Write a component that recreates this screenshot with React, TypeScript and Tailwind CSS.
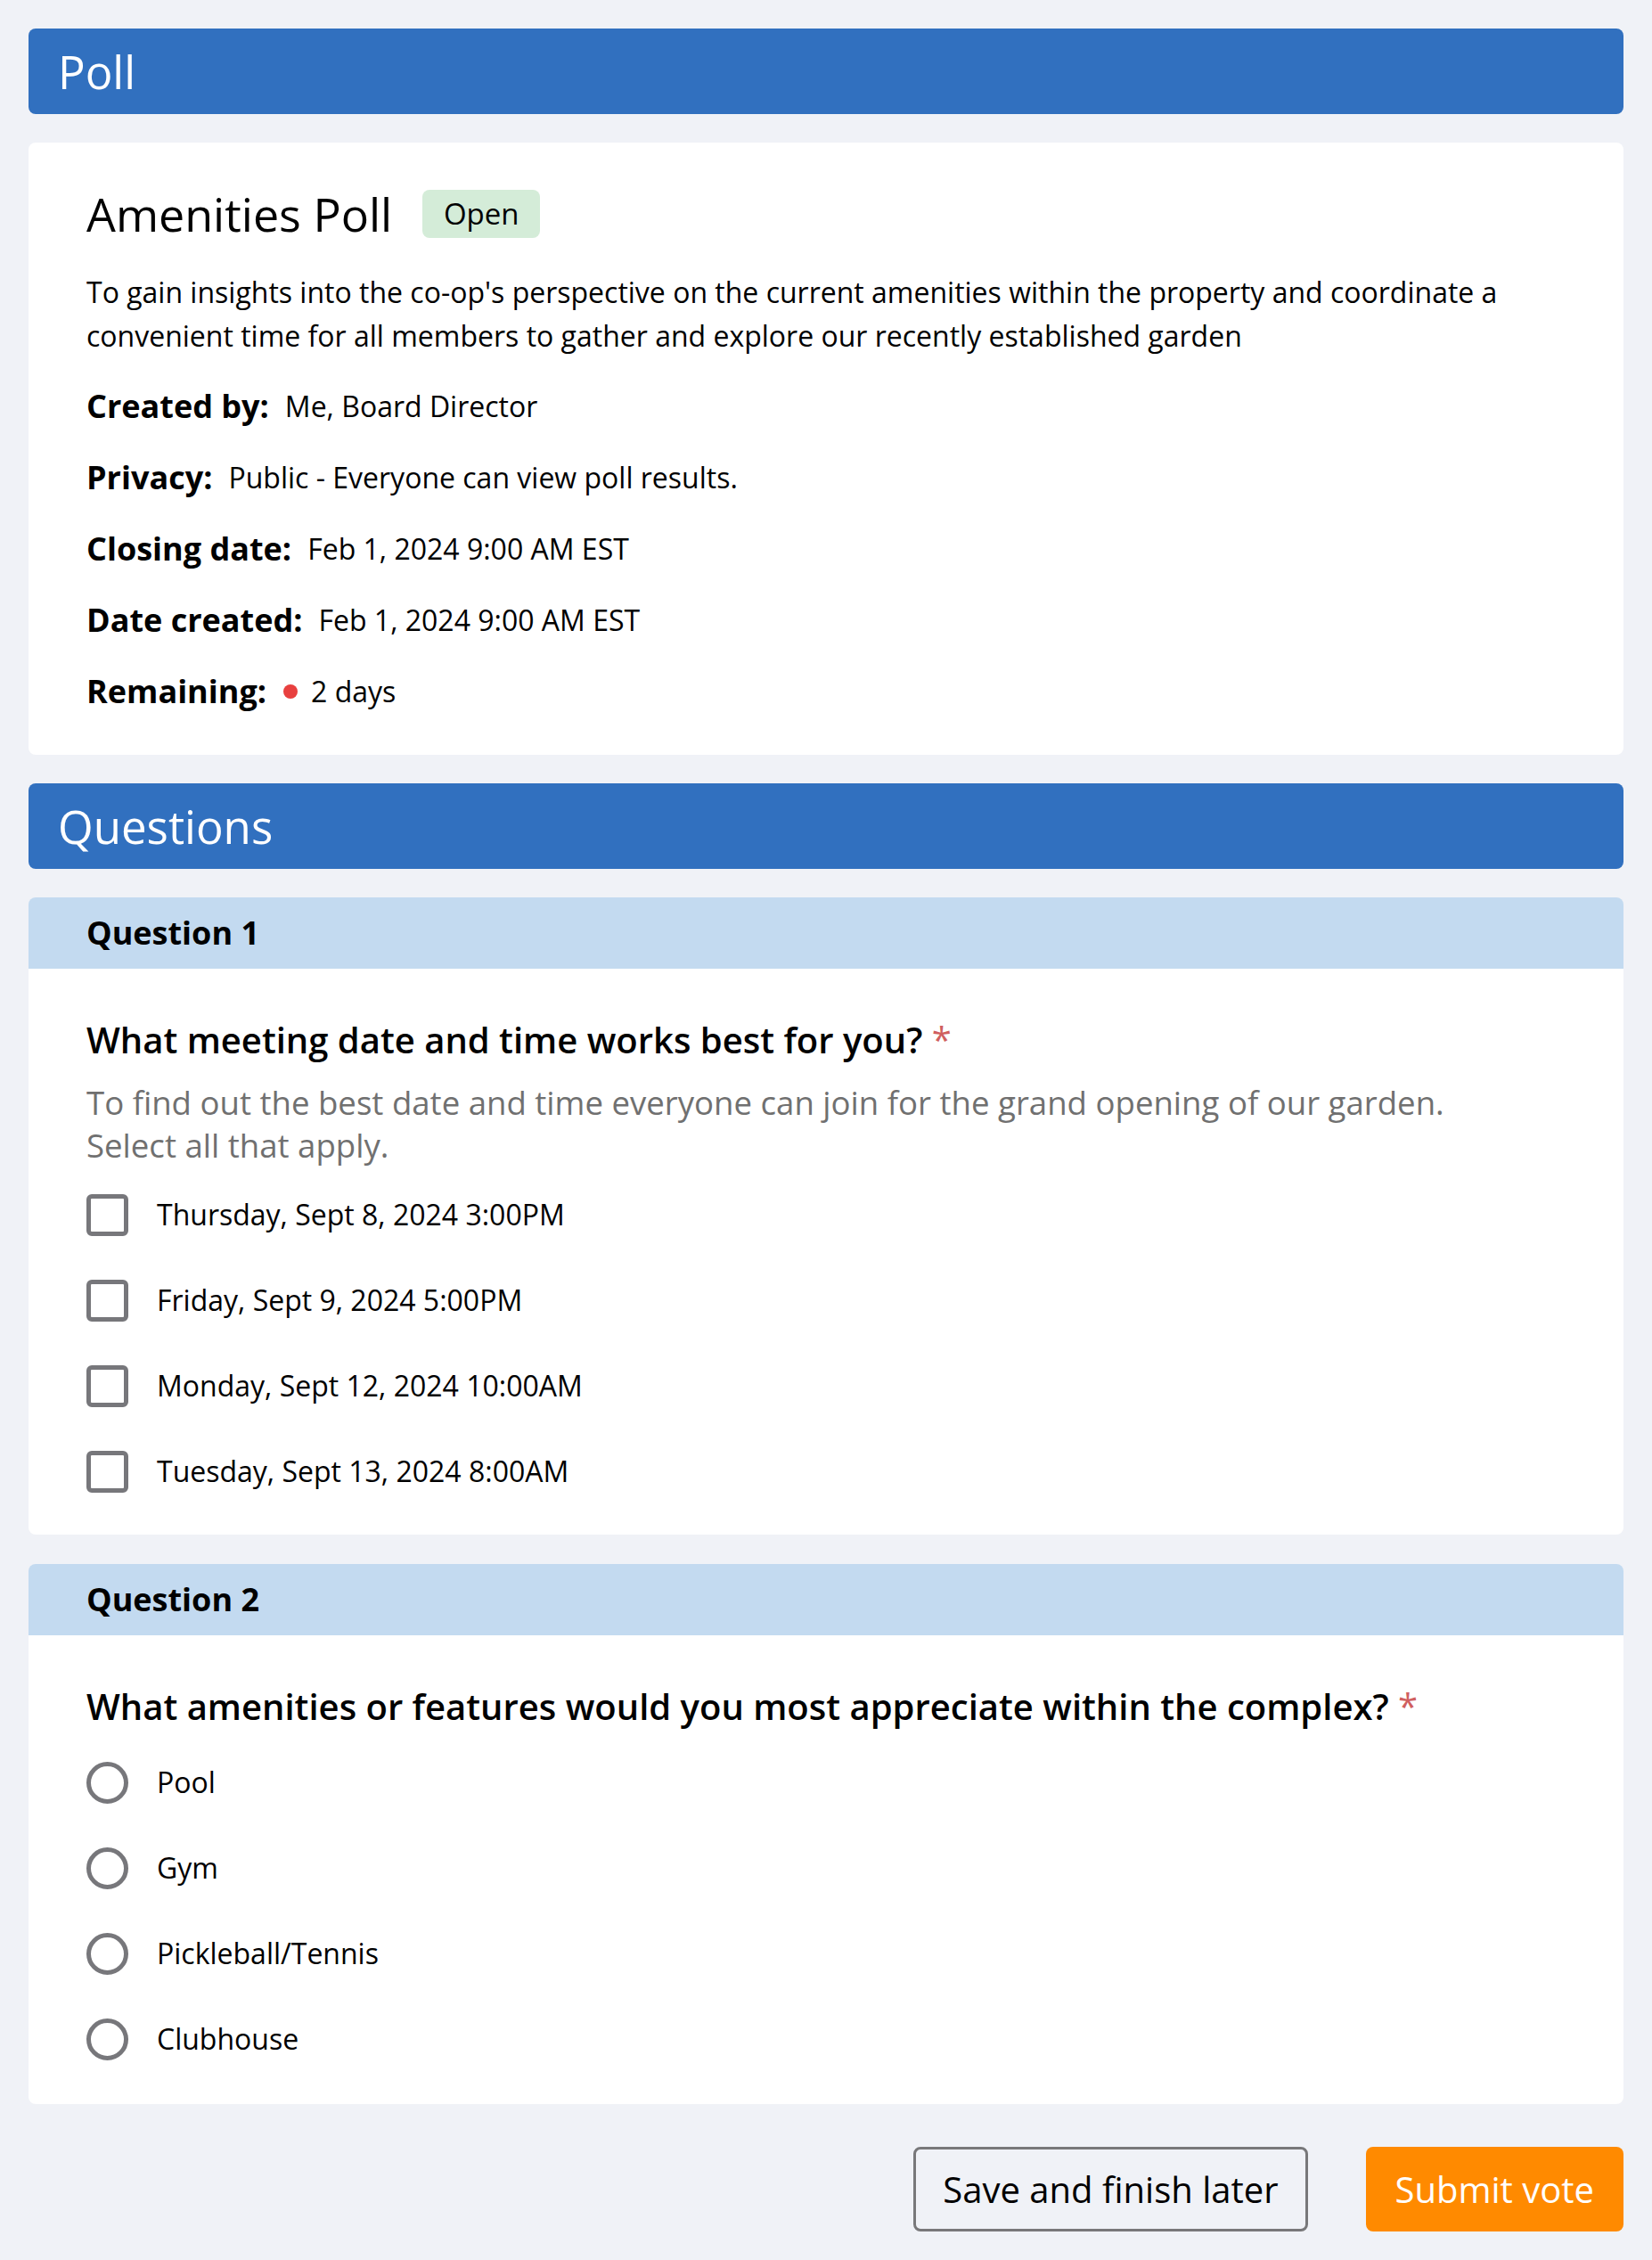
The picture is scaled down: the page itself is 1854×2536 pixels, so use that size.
import React, { useState } from 'react';

const details: { label: string; value: string; dot?: boolean }[] = [
  { label: 'Created by:', value: 'Me, Board Director' },
  { label: 'Privacy:', value: 'Public - Everyone can view poll results.' },
  { label: 'Closing date:', value: 'Feb 1, 2024 9:00 AM EST' },
  { label: 'Date created:', value: 'Feb 1, 2024 9:00 AM EST' },
  { label: 'Remaining:', value: '2 days', dot: true },
];

const dateOptions = [
  'Thursday, Sept 8, 2024 3:00PM',
  'Friday, Sept 9, 2024 5:00PM',
  'Monday, Sept 12, 2024 10:00AM',
  'Tuesday, Sept 13, 2024 8:00AM',
];

const amenityOptions = ['Pool', 'Gym', 'Pickleball/Tennis', 'Clubhouse'];

const SectionHeader: React.FC<{ title: string }> = ({ title }) => (
  <div className="flex h-[96px] items-center rounded-[8px] bg-[#3170bf] px-[33px]">
    <h2 className="text-[51px] leading-none text-white">{title}</h2>
  </div>
);

const QuestionHeader: React.FC<{ title: string }> = ({ title }) => (
  <div className="flex h-[80px] items-center rounded-t-[8px] bg-[#c3daf0] px-[65px]">
    <h3 className="text-[36px] font-bold leading-none text-black">{title}</h3>
  </div>
);

const App: React.FC = () => {
  const [checked, setChecked] = useState<string[]>([]);
  const [amenity, setAmenity] = useState<string>('');

  const toggle = (opt: string) =>
    setChecked((prev) => (prev.includes(opt) ? prev.filter((o) => o !== opt) : [...prev, opt]));

  return (
    <div className="min-h-screen w-full bg-[#f0f2f7] px-[32px] pt-[32px] pb-[33px] font-['Open_Sans',sans-serif] text-black">
      <SectionHeader title="Poll" />

      {/* Poll summary */}
      <div className="mt-[32px] rounded-[8px] bg-white px-[65px] pt-[41px] pb-[47px]">
        <div className="flex h-[78px] items-center">
          <h1 className="text-[52px] font-medium leading-none">Amenities Poll</h1>
          <span className="ml-[34px] flex h-[54px] w-[132px] items-center justify-center rounded-[8px] bg-[#d4ecd8] text-[33px] font-medium">
            Open
          </span>
        </div>
        <p className="mt-[25px] text-[32px] leading-[48.5px]">
          To gain insights into the co-op's perspective on the current amenities within the property and coordinate a
          convenient time for all members to gather and explore our recently established garden
        </p>
        <div className="mt-[31px] flex flex-col gap-[32px]">
          {details.map((d) => (
            <div key={d.label} className="flex h-[48px] items-center">
              <span className="text-[36px] font-bold">{d.label}</span>
              {d.dot && <span className="ml-[19px] h-[16px] w-[16px] rounded-full bg-[#e8403f]" />}
              <span className={`${d.dot ? 'ml-[15px]' : 'ml-[18px]'} text-[32px]`}>{d.value}</span>
            </div>
          ))}
        </div>
      </div>

      <div className="mt-[32px]">
        <SectionHeader title="Questions" />
      </div>

      {/* Question 1 */}
      <div className="mt-[32px]">
        <QuestionHeader title="Question 1" />
        <div className="rounded-b-[8px] bg-white px-[65px] pt-[51px] pb-[47px]">
          <h4 className="text-[40px] font-semibold leading-[58px]">
            What meeting date and time works best for you? <span className="font-medium text-[#d05f5f]">*</span>
          </h4>
          <p className="mt-[17px] text-[36.6px] leading-[48px] text-[#707070]">
            To find out the best date and time everyone can join for the grand opening of our garden.
            <br />
            Select all that apply.
          </p>
          <div className="mt-[30px] flex flex-col gap-[48px]">
            {dateOptions.map((opt) => (
              <label key={opt} className="flex h-[48px] cursor-pointer items-center">
                <input
                  type="checkbox"
                  checked={checked.includes(opt)}
                  onChange={() => toggle(opt)}
                  className="sr-only"
                />
                <span className="h-[47px] w-[47px] shrink-0 rounded-[6px] border-[5px] border-[#77777b] bg-white" />
                <span className="ml-[32px] text-[32px]">{opt}</span>
              </label>
            ))}
          </div>
        </div>
      </div>

      {/* Question 2 */}
      <div className="mt-[33px]">
        <QuestionHeader title="Question 2" />
        <div className="rounded-b-[8px] bg-white px-[65px] pt-[51px] pb-[49px]">
          <h4 className="text-[40px] font-semibold leading-[58px]">
            What amenities or features would you most appreciate within the complex?{' '}
            <span className="font-medium text-[#d05f5f]">*</span>
          </h4>
          <div className="mt-[32px] flex flex-col gap-[48px]">
            {amenityOptions.map((opt) => (
              <label key={opt} className="flex h-[48px] cursor-pointer items-center">
                <input
                  type="radio"
                  name="amenity"
                  checked={amenity === opt}
                  onChange={() => setAmenity(opt)}
                  className="sr-only"
                />
                <span className="h-[47px] w-[47px] shrink-0 rounded-full border-[5px] border-[#77777b] bg-white" />
                <span className="ml-[32px] text-[32px]">{opt}</span>
              </label>
            ))}
          </div>
        </div>
      </div>

      {/* Actions */}
      <div className="mt-[48px] flex justify-end gap-[65px]">
        <button className="h-[95px] rounded-[8px] border-[3px] border-[#78787a] bg-transparent px-[30px] text-[40px] font-medium">
          Save and finish later
        </button>
        <button className="h-[95px] rounded-[8px] bg-[#ff8a00] px-[33px] text-[40px] font-medium text-white">
          Submit vote
        </button>
      </div>
    </div>
  );
};

export default App;
